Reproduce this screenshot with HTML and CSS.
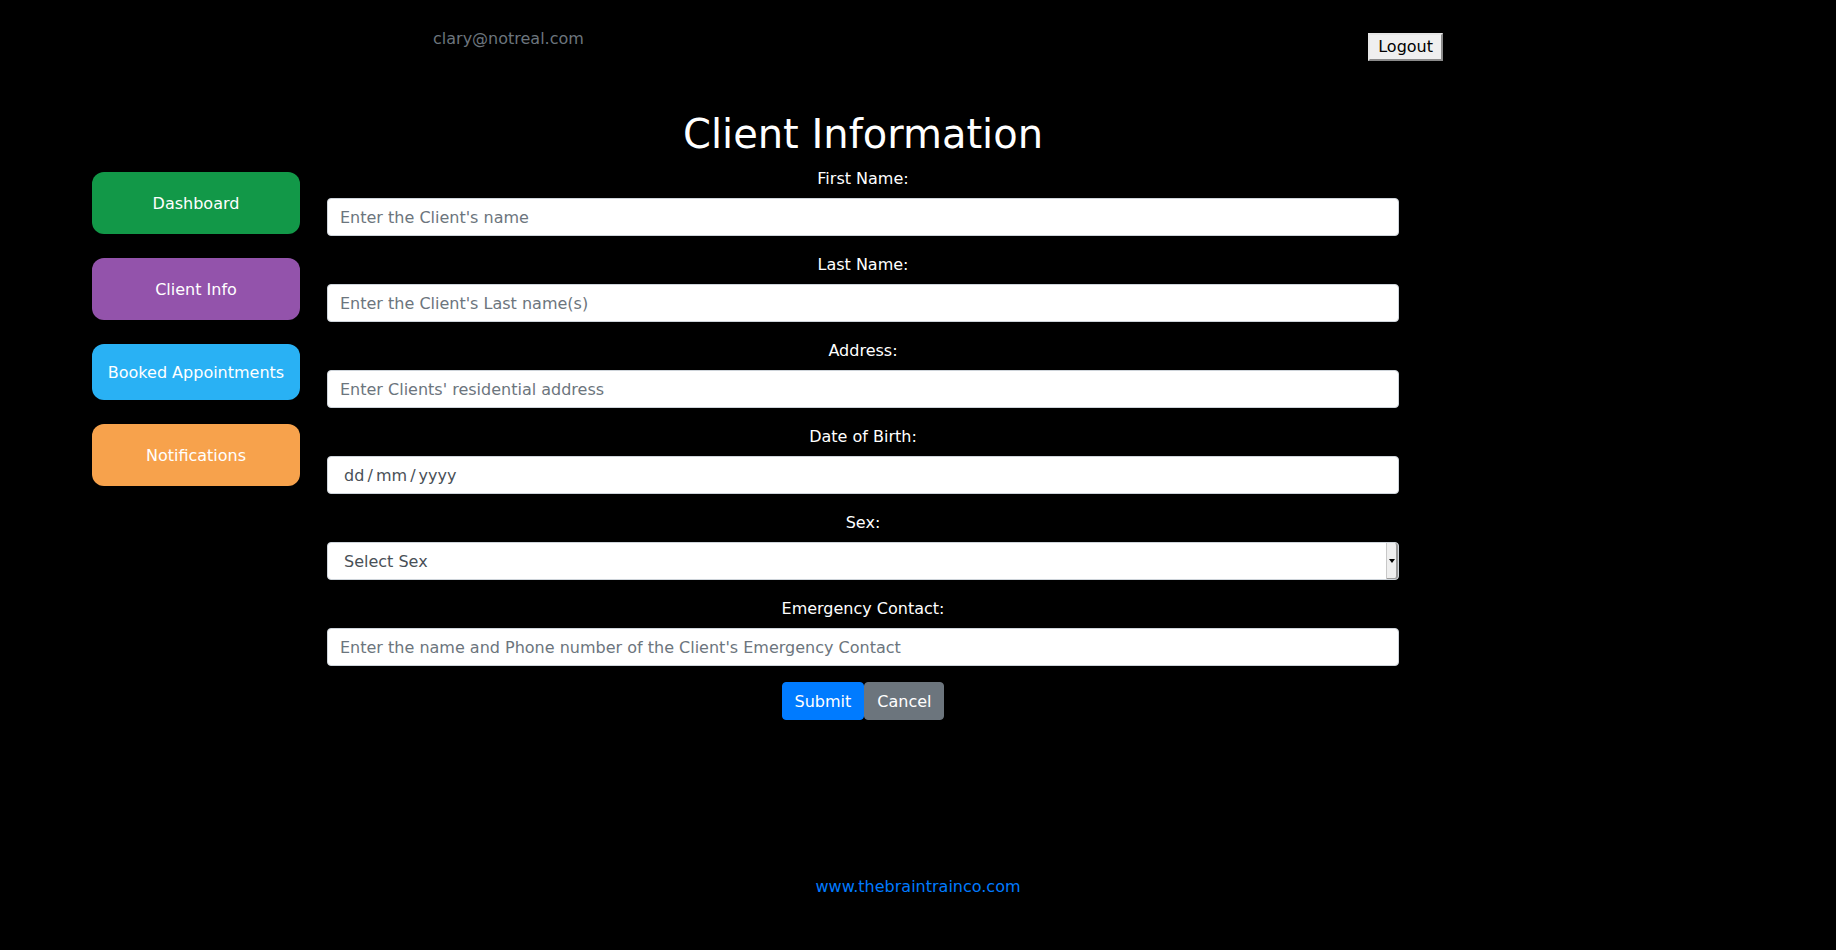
FILE: index.html
```html
<!DOCTYPE html>
<html lang="en">
<head>
<meta charset="utf-8">
<title>Client Information</title>
<link rel="stylesheet" href="styles.css">
</head>
<body>
<header class="topbar">
  <span class="user-email">clary@notreal.com</span>
  <button class="logout" type="button">Logout</button>
</header>

<div class="layout">
  <h1 class="page-title">Client Information</h1>

  <nav class="side-nav">
    <a class="nav-btn nav-green" href="#">Dashboard</a>
    <a class="nav-btn nav-purple" href="#">Client Info</a>
    <a class="nav-btn nav-blue nav-short" href="#">Booked Appointments</a>
    <a class="nav-btn nav-orange" href="#">Notifications</a>
  </nav>

  <form class="client-form">
    <div class="form-group">
      <label for="fname">First Name:</label>
      <input class="form-control" id="fname" type="text" placeholder="Enter the Client's name">
    </div>
    <div class="form-group">
      <label for="lname">Last Name:</label>
      <input class="form-control" id="lname" type="text" placeholder="Enter the Client's Last name(s)">
    </div>
    <div class="form-group">
      <label for="address">Address:</label>
      <input class="form-control" id="address" type="text" placeholder="Enter Clients' residential address">
    </div>
    <div class="form-group">
      <label for="dob">Date of Birth:</label>
      <input class="form-control date-control" id="dob" type="text" placeholder="dd / mm / yyyy">
    </div>
    <div class="form-group">
      <label for="sex">Sex:</label>
      <div class="select-wrap">
        <select class="form-control select-control" id="sex">
          <option>Select Sex</option>
          <option>Male</option>
          <option>Female</option>
        </select>
      </div>
    </div>
    <div class="form-group">
      <label for="emergency">Emergency Contact:</label>
      <input class="form-control" id="emergency" type="text" placeholder="Enter the name and Phone number of the Client's Emergency Contact">
    </div>
    <div class="form-actions">
      <button class="btn btn-primary" type="submit">Submit</button>
      <button class="btn btn-secondary" type="button">Cancel</button>
    </div>
  </form>
</div>

<footer class="site-footer">
  <a class="footer-link" href="#">www.thebraintrainco.com</a>
</footer>
</body>
</html>
```

FILE: styles.css
```css
* {
  box-sizing: border-box;
}

html, body {
  margin: 0;
  padding: 0;
}

body {
  background: #000;
  color: #fff;
  font-family: "DejaVu Sans", "Liberation Sans", sans-serif;
  font-size: 16px;
  line-height: 1.5;
  min-height: 950px;
}

.topbar {
  display: flex;
  justify-content: space-between;
  align-items: flex-start;
  padding: 27px 0 0 0;
  margin: 0 393px 0 433px;
  height: 60px;
}

.user-email {
  color: #6c757d;
  line-height: 24px;
}

.logout {
  margin-top: 6px;
  height: 28px;
  padding: 0 8px;
  font-family: inherit;
  font-size: 16px;
  line-height: 24px;
  color: #000;
  background: #efefef;
  border-style: solid;
  border-width: 2px;
  border-color: #e6e6e6 #8a8a8a #8a8a8a #e6e6e6;
  border-radius: 0;
}

.layout {
  display: grid;
  grid-template-columns: 208px 1072px;
  column-gap: 27px;
  margin: 50px 0 0 92px;
}

.page-title {
  grid-column: 2;
  grid-row: 1;
  margin: 0 0 8px 0;
  font-size: 40px;
  font-weight: 500;
  line-height: 1.2;
  text-align: center;
  color: #fff;
}

.side-nav {
  grid-column: 1;
  grid-row: 2;
  display: flex;
  flex-direction: column;
  gap: 24px;
  padding-top: 6px;
}

.nav-btn {
  display: flex;
  align-items: center;
  justify-content: center;
  height: 62px;
  border-radius: 12px;
  color: #fff;
  text-decoration: none;
  font-size: 16px;
  padding-top: 1px;
}

.nav-short {
  height: 56px;
}

.nav-green { background: #129848; }
.nav-purple { background: #9353ab; }
.nav-blue { background: #29b1f4; }
.nav-orange { background: #f7a24c; }

.client-form {
  grid-column: 2;
  grid-row: 2;
}

.form-group {
  margin-bottom: 16px;
  text-align: center;
}

.form-group label {
  display: block;
  margin-bottom: 7px;
  line-height: 24px;
  padding-top: 1px;
}

.form-control {
  display: block;
  width: 100%;
  height: 38px;
  padding: 6px 12px;
  font-family: inherit;
  font-size: 16px;
  line-height: 1.5;
  color: #495057;
  background: #fff;
  border: 1px solid #ced4da;
  border-radius: 4px;
  text-align: left;
  margin: 0;
}

.form-control::placeholder {
  color: #6c757d;
  opacity: 1;
}

.date-control {
  padding-left: 16px;
  word-spacing: -2px;
}

.date-control::placeholder {
  color: #495057;
}

.select-wrap {
  position: relative;
}

.select-control {
  appearance: none;
  -webkit-appearance: none;
  padding: 7px 24px 5px 16px;
}

.select-wrap::after {
  content: "";
  position: absolute;
  top: 1px;
  right: 1px;
  bottom: 1px;
  width: 9px;
  background: #efefef;
  border-left: 1px solid #c8c8c8;
  border-right: 2px solid #9a9a9a;
  border-bottom: 1px solid #9a9a9a;
  border-radius: 0 3px 3px 0;
  pointer-events: none;
}

.select-wrap::before {
  content: "";
  position: absolute;
  top: 17px;
  right: 4px;
  width: 0;
  height: 0;
  border-left: 3px solid transparent;
  border-right: 3px solid transparent;
  border-top: 4px solid #000;
  z-index: 1;
  pointer-events: none;
}

.form-actions {
  display: flex;
  justify-content: center;
}

.btn {
  height: 38px;
  padding: 7px 12px 5px;
  font-family: inherit;
  font-size: 16px;
  line-height: 1.5;
  color: #fff;
  border: 1px solid transparent;
  border-radius: 4px;
  margin: 0;
}

.btn-primary {
  background: #007bff;
  border-color: #007bff;
}

.btn-secondary {
  background: #6c757d;
  border-color: #6c757d;
}

.site-footer {
  margin-top: 155px;
  text-align: center;
  line-height: 24px;
}

.footer-link {
  color: #007bff;
  text-decoration: none;
}
```
